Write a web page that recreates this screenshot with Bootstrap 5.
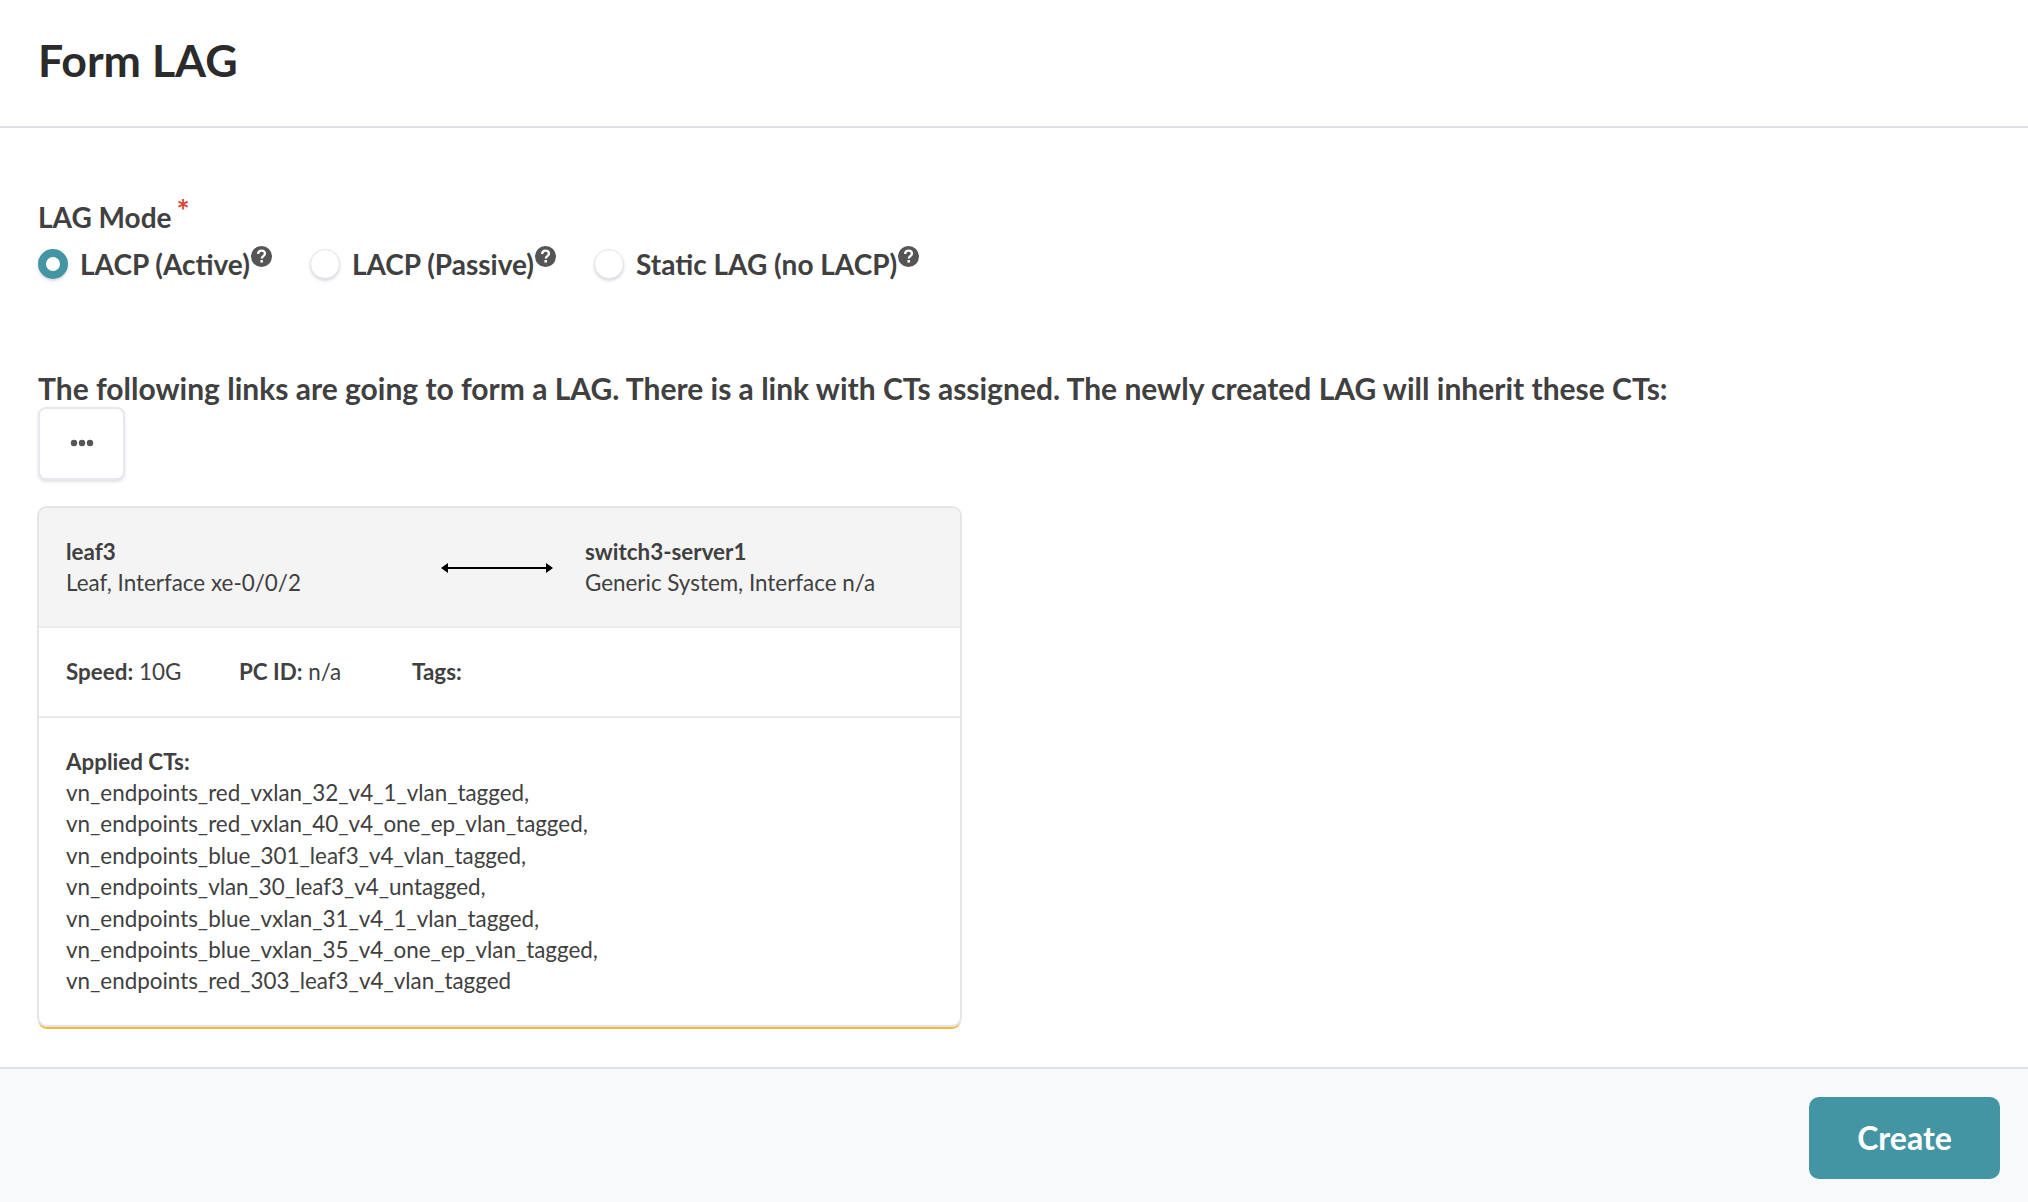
<!DOCTYPE html>
<html lang="en">
<head>
    <meta charset="UTF-8">
    <title>Form LAG</title>
    <link href="https://cdn.jsdelivr.net/npm/bootstrap@5.3.0/dist/css/bootstrap.min.css" rel="stylesheet">
    <style>
        html, body { height: 100%; }
        body { font-family: Lato, "Liberation Sans", sans-serif; color: #404040; font-size: 22.4px; line-height: 31.4px; background: #fff; }
        .lag-page { height: 1202px; }
        .lag-header { height: 128px; padding: 0 38px 5px; border-bottom: 2px solid #dfe1e5; }
        .lag-title { font-size: 44.7px; font-weight: 700; color: #2b2b2b; margin: 0; line-height: 1; }
        .lag-body { padding: 71px 38px 0; }
        .lag-label { font-size: 28px; font-weight: 700; line-height: 36px; }
        .lag-req { color: #db4437; font-size: 31px; font-weight: 700; line-height: 1; position: relative; top: -6px; margin-left: 5px; }
        .lag-radios { gap: 38px; margin-top: 9px; height: 40px; }
        .lag-radio { gap: 12px; font-size: 28px; font-weight: 700; line-height: 36px; }
        .lag-dot { width: 30px; height: 30px; border-radius: 50%; background: #fff; border: 1px solid #e2e4e8; box-shadow: 0 2px 3px rgba(40, 50, 70, .18); flex: none; }
        .lag-dot.on { background: #fff; border: 8px solid #4495a4; }
        .lag-help { width: 21px; height: 21px; align-self: flex-start; margin-left: 1px; }
        .lag-note { font-size: 30px; font-weight: 700; line-height: 36px; margin-top: 86px; }
        .lag-more { width: 87px; height: 73px; margin-top: 1px; padding: 0 0 2px; background: #fff; border: 2px solid #e6e8ee; border-radius: 8px; box-shadow: 0 2px 3px rgba(40, 50, 70, .14); color: #555; }
        .lag-link { width: 925px; margin-top: 26px; margin-left: -1px; border: 2px solid #e4e5e9; border-radius: 10px; box-shadow: 0 3px 0 -1px #f2b941; overflow: hidden; }
        .lag-link-head { height: 120px; background: #f4f4f4; padding: 0 27px; border-bottom: 2px solid #e9eaed; }
        .lag-end { width: 380px; }
        .lag-arrow { width: 112px; margin: 2px 32px 0 -5px; }
        .lag-stats { height: 90px; padding: 0 27px; border-bottom: 2px solid #e9eaed; }
        .lag-stat-a { width: 173px; }
        .lag-stat-b { width: 173px; }
        .lag-cts { height: 307px; padding: 27.6px 27px 0; }
        .lag-foot { height: 135px; background: #f8f9fb; border-top: 2px solid #dfe1e5; padding: 28px 28px 0 0; margin-top: 38px; }
        .lag-create { width: 191px; height: 82px; background: #4495a4; border: 0; border-radius: 10px; color: #fff; font-size: 32px; font-weight: 700; }
        .lag-create:hover { background: #3d8693; color: #fff; }
    </style>
</head>
<body>
<div class="lag-page d-flex flex-column">
    <div class="lag-header d-flex align-items-center">
        <h1 class="lag-title">Form LAG</h1>
    </div>

    <div class="lag-body flex-grow-1">
        <div class="lag-label">LAG Mode<span class="lag-req">*</span></div>
        <div class="lag-radios d-flex align-items-center">
            <div class="lag-radio d-flex align-items-center">
                <span class="lag-dot on"></span>
                <span class="d-flex">LACP (Active)<svg class="lag-help" viewBox="0 0 20 20"><circle cx="10" cy="10" r="10" fill="#555"/><path d="M6.8 7.6c0-2 1.4-3.2 3.3-3.2s3.2 1.1 3.2 2.8c0 2.4-3 2.4-3 4.6" fill="none" stroke="#fff" stroke-width="2.2"/><rect x="9" y="13.4" width="2.4" height="2.4" fill="#fff"/></svg></span>
            </div>
            <div class="lag-radio d-flex align-items-center">
                <span class="lag-dot"></span>
                <span class="d-flex">LACP (Passive)<svg class="lag-help" viewBox="0 0 20 20"><circle cx="10" cy="10" r="10" fill="#555"/><path d="M6.8 7.6c0-2 1.4-3.2 3.3-3.2s3.2 1.1 3.2 2.8c0 2.4-3 2.4-3 4.6" fill="none" stroke="#fff" stroke-width="2.2"/><rect x="9" y="13.4" width="2.4" height="2.4" fill="#fff"/></svg></span>
            </div>
            <div class="lag-radio d-flex align-items-center">
                <span class="lag-dot"></span>
                <span class="d-flex">Static LAG (no LACP)<svg class="lag-help" viewBox="0 0 20 20"><circle cx="10" cy="10" r="10" fill="#555"/><path d="M6.8 7.6c0-2 1.4-3.2 3.3-3.2s3.2 1.1 3.2 2.8c0 2.4-3 2.4-3 4.6" fill="none" stroke="#fff" stroke-width="2.2"/><rect x="9" y="13.4" width="2.4" height="2.4" fill="#fff"/></svg></span>
            </div>
        </div>

        <div class="lag-note">The following links are going to form a LAG. There is a link with CTs assigned. The newly created LAG will inherit these CTs:</div>
        <button class="btn lag-more d-flex align-items-center justify-content-center" type="button">
            <svg width="24" height="8" viewBox="0 0 24 8"><circle cx="4" cy="4" r="3.2" fill="#555"/><circle cx="12" cy="4" r="3.2" fill="#555"/><circle cx="20" cy="4" r="3.2" fill="#555"/></svg>
        </button>

        <div class="lag-link">
            <div class="lag-link-head d-flex align-items-center">
                <div class="lag-end">
                    <div class="fw-bold">leaf3</div>
                    <div>Leaf, Interface xe-0/0/2</div>
                </div>
                <svg class="lag-arrow" height="12" viewBox="0 0 112 12"><path d="M6 6h100" stroke="#000" stroke-width="2"/><path d="M0 6l7-5v10zM112 6l-7-5v10z" fill="#000"/></svg>
                <div>
                    <div class="fw-bold">switch3-server1</div>
                    <div>Generic System, Interface n/a</div>
                </div>
            </div>
            <div class="lag-stats d-flex align-items-center">
                <div class="lag-stat-a"><b>Speed:</b> 10G</div>
                <div class="lag-stat-b"><b>PC ID:</b> n/a</div>
                <div><b>Tags:</b></div>
            </div>
            <div class="lag-cts">
                <div class="fw-bold">Applied CTs:</div>
                <div>vn_endpoints_red_vxlan_32_v4_1_vlan_tagged,</div>
                <div>vn_endpoints_red_vxlan_40_v4_one_ep_vlan_tagged,</div>
                <div>vn_endpoints_blue_301_leaf3_v4_vlan_tagged,</div>
                <div>vn_endpoints_vlan_30_leaf3_v4_untagged,</div>
                <div>vn_endpoints_blue_vxlan_31_v4_1_vlan_tagged,</div>
                <div>vn_endpoints_blue_vxlan_35_v4_one_ep_vlan_tagged,</div>
                <div>vn_endpoints_red_303_leaf3_v4_vlan_tagged</div>
            </div>
        </div>
    </div>

    <div class="lag-foot d-flex justify-content-end align-items-start">
        <button class="btn lag-create" type="button">Create</button>
    </div>
</div>
<script src="https://cdn.jsdelivr.net/npm/bootstrap@5.3.0/dist/js/bootstrap.bundle.min.js"></script>
</body>
</html>
